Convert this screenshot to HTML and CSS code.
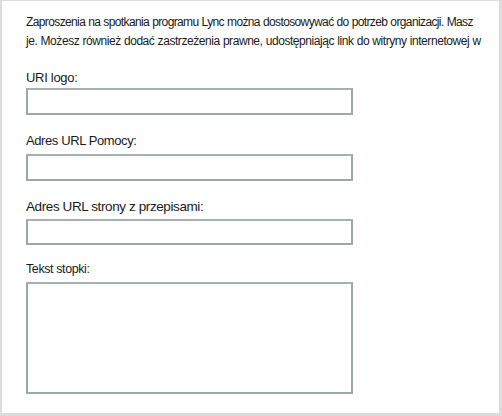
FILE: index.html
```html
<!DOCTYPE html>
<html lang="pl">
<head>
<meta charset="utf-8">
<link rel="stylesheet" href="styles.css">
</head>
<body>
<div class="frame">
  <p class="desc"><span class="l1">Zaproszenia na spotkania programu Lync można dostosowywać do potrzeb organizacji. Masz</span><br><span class="l2">je. Możesz również dodać zastrzeżenia prawne, udostępniając link do witryny internetowej w</span></p>
  <div class="field f1">
    <label class="lbl">URI logo:</label>
    <div class="box"></div>
  </div>
  <div class="field f2">
    <label class="lbl">Adres URL Pomocy:</label>
    <div class="box"></div>
  </div>
  <div class="field f3">
    <label class="lbl">Adres URL strony z przepisami:</label>
    <div class="box"></div>
  </div>
  <div class="field f4">
    <label class="lbl">Tekst stopki:</label>
    <div class="box area"></div>
  </div>
</div>
</body>
</html>
```
FILE: styles.css
```css
html, body {
  margin: 0;
  padding: 0;
  background: #ffffff;
}
.frame {
  box-sizing: border-box;
  width: 502px;
  height: 416px;
  border-style: solid;
  border-color: #dcdcdc;
  border-width: 1px 3px 3px 2px;
  padding: 12px 0 0 24px;
  font-family: "Liberation Sans", Arial, sans-serif;
  color: #1a1a1a;
  overflow: hidden;
}
.desc {
  margin: 0;
  font-size: 12px;
  line-height: 19px;
  word-spacing: 0.3px;
  white-space: nowrap;
}
.l1 { letter-spacing: -0.62px; }
.l2 { letter-spacing: -0.44px; }
.field {
  display: flex;
  flex-direction: column;
}
.lbl {
  display: block;
  font-size: 13px;
  line-height: 16px;
  letter-spacing: -0.3px;
}
.box {
  box-sizing: border-box;
  width: 327px;
  height: 27px;
  border: 2px solid #9ea7a7;
  border-top-color: #a9b0b0;
  background: #fff;
}
.area {
  height: 112px;
}
.f1 { margin-top: 19px; }
.f1 .lbl { margin-bottom: 2px; }
.f2 { margin-top: 18px; }
.f2 .lbl { margin-bottom: 5px; letter-spacing: -0.4px; }
.f3 { margin-top: 18px; }
.f3 .lbl { font-size: 13.5px; letter-spacing: -0.4px; margin-bottom: 4px; }
.f3 .box { height: 26px; }
.f4 { margin-top: 16px; }
.f4 .lbl { font-size: 12.5px; letter-spacing: -0.4px; margin-bottom: 5px; }
```
